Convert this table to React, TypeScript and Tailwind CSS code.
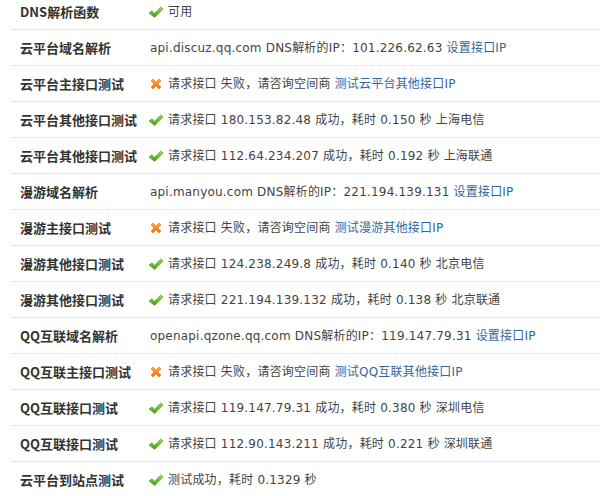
import React from "react";

type Row = {
  label: string;
  icon?: "ok" | "fail";
  text: string;
  link?: string;
};

const rows: Row[] = [
  { label: "DNS解析函数", icon: "ok", text: "可用" },
  { label: "云平台域名解析", text: "api.discuz.qq.com DNS解析的IP：101.226.62.63", link: "设置接口IP" },
  { label: "云平台主接口测试", icon: "fail", text: "请求接口 失败，请咨询空间商", link: "测试云平台其他接口IP" },
  { label: "云平台其他接口测试", icon: "ok", text: "请求接口 180.153.82.48 成功，耗时 0.150 秒 上海电信" },
  { label: "云平台其他接口测试", icon: "ok", text: "请求接口 112.64.234.207 成功，耗时 0.192 秒 上海联通" },
  { label: "漫游域名解析", text: "api.manyou.com DNS解析的IP：221.194.139.131", link: "设置接口IP" },
  { label: "漫游主接口测试", icon: "fail", text: "请求接口 失败，请咨询空间商", link: "测试漫游其他接口IP" },
  { label: "漫游其他接口测试", icon: "ok", text: "请求接口 124.238.249.8 成功，耗时 0.140 秒 北京电信" },
  { label: "漫游其他接口测试", icon: "ok", text: "请求接口 221.194.139.132 成功，耗时 0.138 秒 北京联通" },
  { label: "QQ互联域名解析", text: "openapi.qzone.qq.com DNS解析的IP：119.147.79.31", link: "设置接口IP" },
  { label: "QQ互联主接口测试", icon: "fail", text: "请求接口 失败，请咨询空间商", link: "测试QQ互联其他接口IP" },
  { label: "QQ互联接口测试", icon: "ok", text: "请求接口 119.147.79.31 成功，耗时 0.380 秒 深圳电信" },
  { label: "QQ互联接口测试", icon: "ok", text: "请求接口 112.90.143.211 成功，耗时 0.221 秒 深圳联通" },
  { label: "云平台到站点测试", icon: "ok", text: "测试成功，耗时 0.1329 秒" },
];

function OkIcon() {
  return (
    <svg width="16" height="16" viewBox="0 0 16 16" className="shrink-0">
      <defs>
        <linearGradient id="okg" x1="0" y1="0" x2="0" y2="1">
          <stop offset="0" stopColor="#9be05a" />
          <stop offset="1" stopColor="#3f9a14" />
        </linearGradient>
      </defs>
      <path
        d="M1 9 L3.8 6.8 L6.6 9.2 L12.8 3 L15.2 5 L6.6 13.6 Z"
        fill="url(#okg)"
        stroke="#4a9c1c"
        strokeWidth="0.6"
        strokeLinejoin="round"
      />
    </svg>
  );
}

function FailIcon() {
  return (
    <svg width="16" height="16" viewBox="0 0 16 16" className="shrink-0">
      <defs>
        <linearGradient id="failg" x1="0" y1="0" x2="0" y2="1">
          <stop offset="0" stopColor="#ffab3d" />
          <stop offset="1" stopColor="#f26a00" />
        </linearGradient>
      </defs>
      <path
        d="M3 5 L5 3 L8 6 L11 3 L13 5 L10 8 L13 11 L11 13 L8 10 L5 13 L3 11 L6 8 Z"
        fill="url(#failg)"
        stroke="#e86a0a"
        strokeWidth="0.5"
        strokeLinejoin="round"
      />
    </svg>
  );
}

export default function App() {
  return (
    <div
      className="w-[600px] h-[496px] overflow-hidden bg-white"
      style={{ fontFamily: '"DejaVu Sans", "Noto Sans CJK SC", sans-serif' }}
    >
      <div className="-mt-[6px] pl-[12px]">
        {rows.map((r, i) => (
          <div
            key={i}
            className="flex items-center h-[36px] border-b border-dotted border-[#d6d6d6]"
          >
            <div
              className="w-[136px] shrink-0 pl-[8px] text-[13px] font-bold text-[#333] whitespace-nowrap"
              style={{ fontFamily: '"Noto Sans CJK SC", sans-serif' }}
            >
              {r.label}
            </div>
            <div className="flex items-center text-[12px] text-[#444] whitespace-nowrap tracking-[0.2px]">
              {r.icon === "ok" && (
                <span className="mr-[4px]">
                  <OkIcon />
                </span>
              )}
              {r.icon === "fail" && (
                <span className="mr-[4px]">
                  <FailIcon />
                </span>
              )}
              <span className={r.icon ? "" : "pl-[2px]"}>{r.text}</span>
              {r.link && <span className="ml-[4px] text-[#336699]">{r.link}</span>}
            </div>
          </div>
        ))}
      </div>
    </div>
  );
}
